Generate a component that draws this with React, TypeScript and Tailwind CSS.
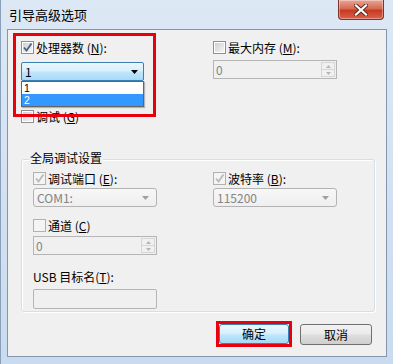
import React from 'react';

const Check = ({ checked = false, disabled = false }: { checked?: boolean; disabled?: boolean }) => (
    <span
        className={`relative w-[13px] h-[13px] shrink-0 border flex items-center justify-center ${disabled ? 'border-[#b1b1b1] bg-[#f4f4f4]' : 'border-[#8e8f8f] bg-white'}`}
    >
        <span
            className={`w-[9px] h-[9px] ${disabled ? 'bg-[#f4f4f4]' : 'bg-[linear-gradient(135deg,#cbcfd5,#f6f6f6)]'}`}
        />
        {checked && (
            <svg className="absolute inset-0" width="11" height="11" viewBox="0 0 11 11">
                <path
                    d="M2 5.5 L4.5 8.5 L9.5 1.5"
                    fill="none"
                    stroke={disabled ? '#b9b9b9' : '#4d6185'}
                    strokeWidth="1.8"
                />
            </svg>
        )}
    </span>
);

const Arrow = ({ color }: { color: string }) => (
    <svg width="7" height="4" viewBox="0 0 7 4">
        <path d="M0 0 H7 L3.5 4 Z" fill={color} />
    </svg>
);

const DisabledCombo = ({ value }: { value: string }) => (
    <div className="w-[124px] h-[19px] rounded-[3px] border border-[#b3b3b3] bg-[linear-gradient(#f7f7f7,#efefef)] flex items-center justify-between pl-[3px] pr-[7px] text-[#838383]">
        <span className="leading-[13px]">{value}</span>
        <Arrow color="#a0a0a0" />
    </div>
);

const DisabledSpin = ({ value }: { value: string }) => (
    <div className="w-[124px] h-[19px] border border-[#b5b5b5] bg-[#f0f0f0] flex items-stretch text-[#838383]">
        <span className="flex-1 pl-[2px] leading-[17px]">{value}</span>
        <div className="w-[14px] my-[1px] mr-[1px] flex flex-col border border-[#d6d6d6]">
            <div className="flex-1 flex items-center justify-center border-b border-[#d6d6d6]">
                <svg width="5" height="3" viewBox="0 0 5 3"><path d="M0 3 H5 L2.5 0 Z" fill="#b5b5b5" /></svg>
            </div>
            <div className="flex-1 flex items-center justify-center">
                <svg width="5" height="3" viewBox="0 0 5 3"><path d="M0 0 H5 L2.5 3 Z" fill="#b5b5b5" /></svg>
            </div>
        </div>
    </div>
);

export default function App() {
    return (
        <div className="w-[393px] h-[364px] flex flex-col px-[6px] pb-[7px] bg-[linear-gradient(#dde8f5,#c9dbee)] border-l border-[#8aa0b8] text-[12px] text-black font-['Noto_Sans_CJK_SC','Liberation_Sans',sans-serif] overflow-hidden">

            {/* Title bar */}
            <div className="h-[29px] shrink-0 flex items-start pl-[2px]">
                <span className="mt-[8px] leading-[14px] text-[13px]">引导高级选项</span>
                <div className="ml-auto mr-[3px] w-[46px] h-[20px] rounded-b-[4px] border border-t-0 border-[#7c3329] bg-[linear-gradient(#e9a795,#d56a51_45%,#c53b21_55%,#d9624a)] flex items-center justify-center shadow-[inset_0_0_0_1px_rgba(255,255,255,0.35)]">
                    <svg width="14" height="12" viewBox="0 0 14 12">
                        <path d="M2 1.5 L12 10.5 M12 1.5 L2 10.5" stroke="#5a2a22" strokeWidth="4" strokeLinecap="square" />
                        <path d="M2 1.5 L12 10.5 M12 1.5 L2 10.5" stroke="#ffffff" strokeWidth="2.2" strokeLinecap="square" />
                    </svg>
                </div>
            </div>

            {/* Client area */}
            <div className="relative flex-1 border border-[#8396ad] bg-[#f0f0f0] pl-[13px] pt-[11px] flex flex-col">

                {/* Top options */}
                <div className="flex">
                    <div className="w-[192px] flex flex-col">
                        <div className="h-[13px] flex items-center gap-[2px]">
                            <Check checked />
                            <span className="leading-[13px]">处理器数 (<u>N</u>):</span>
                        </div>
                        <div className="mt-[8px] w-[123px] h-[19px] rounded-[2px] border border-[#3c7fb1] bg-[linear-gradient(#eaf6fd,#d9f0fc_45%,#bee6fd_55%,#a7d9f5)] flex items-center justify-between pl-[3px] pr-[5px]">
                            <span className="leading-[13px]">1</span>
                            <Arrow color="#000000" />
                        </div>
                        <div className="mt-[29px] h-[13px] flex items-center gap-[2px]">
                            <Check />
                            <span className="leading-[13px]">调试 (<u>G</u>)</span>
                        </div>
                    </div>
                    <div className="flex flex-col">
                        <div className="h-[13px] flex items-center gap-[2px]">
                            <Check />
                            <span className="leading-[13px]">最大内存 (<u>M</u>):</span>
                        </div>
                        <div className="mt-[6px]">
                            <DisabledSpin value="0" />
                        </div>
                    </div>
                </div>

                {/* Global debug settings */}
                <div className="relative mt-[36px] w-[354px] h-[153px] rounded-[3px] border border-[#d5dfe5] shadow-[inset_1px_1px_0_#ffffff,1px_1px_0_#ffffff] pl-[11px] pt-[12px] flex flex-col">
                    <span className="absolute -top-[9px] left-[7px] px-[1px] bg-[#f0f0f0] leading-[14px]">全局调试设置</span>
                    <div className="flex">
                        <div className="w-[180px] flex flex-col">
                            <div className="h-[13px] flex items-center gap-[2px]">
                                <Check checked disabled />
                                <span className="leading-[13px]">调试端口 (<u>E</u>):</span>
                            </div>
                            <div className="mt-[3px]">
                                <DisabledCombo value="COM1:" />
                            </div>
                        </div>
                        <div className="flex flex-col">
                            <div className="h-[13px] flex items-center gap-[2px]">
                                <Check checked disabled />
                                <span className="leading-[13px]">波特率 (<u>B</u>):</span>
                            </div>
                            <div className="mt-[3px]">
                                <DisabledCombo value="115200" />
                            </div>
                        </div>
                    </div>
                    <div className="mt-[12px] h-[13px] flex items-center gap-[2px]">
                        <Check disabled />
                        <span className="leading-[13px]">通道 (<u>C</u>)</span>
                    </div>
                    <div className="mt-[4px]">
                        <DisabledSpin value="0" />
                    </div>
                    <span className="mt-[15px] leading-[14px]">USB 目标名(<u>T</u>):</span>
                    <div className="mt-[5px] w-[124px] h-[20px] rounded-[2px] border border-[#b5b5b5] bg-[#f0f0f0]" />
                </div>

                {/* Buttons */}
                <div className="mt-[9px] flex items-start justify-end pr-[14px] gap-[8px]">
                    <div className="w-[76px] h-[26px] border-[3px] border-[#e8000c] flex">
                        <button className="flex-1 rounded-[3px] border border-[#3c7fb1] bg-[linear-gradient(#eaf6fd,#d9f0fc_45%,#bee6fd_55%,#a7d9f5)] leading-[14px]">
                            确定
                        </button>
                    </div>
                    <button className="mt-[3px] w-[72px] h-[21px] rounded-[3px] border border-[#707070] bg-[linear-gradient(#f2f2f2,#ebebeb_45%,#dddddd_55%,#cfcfcf)] leading-[14px]">
                        取消
                    </button>
                </div>

                {/* Open drop-down list of the processor combo */}
                <div className="absolute left-[13px] top-[51px] w-[123px] border border-[#646464] bg-white flex flex-col font-['Liberation_Sans',sans-serif] text-[10.5px] shadow-[1px_1px_1px_rgba(0,0,0,0.25)]">
                    <div className="h-[12px] pl-[2px] leading-[12px]">1</div>
                    <div className="h-[12px] pl-[2px] leading-[12px] bg-[#3399ff] text-white">2</div>
                </div>

                {/* Red highlight around processor count */}
                <div className="absolute left-[5px] top-[3px] w-[143px] h-[84px] border-[3px] border-[#e8000c] pointer-events-none" />
            </div>
        </div>
    );
}
